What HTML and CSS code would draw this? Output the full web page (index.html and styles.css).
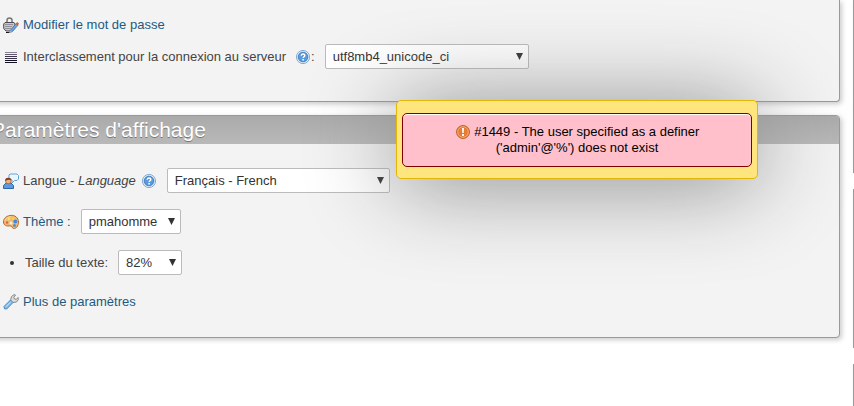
FILE: index.html
```
<!DOCTYPE html>
<html lang="fr">
<head>
    <meta charset="UTF-8">
    <meta name="viewport" content="width=device-width, initial-scale=1.0">
    <title>phpMyAdmin</title>
    <link rel="stylesheet" href="styles.css">
</head>
<body>
    <svg class="defs" width="0" height="0">
        <symbol id="help" viewBox="0 0 16 16">
            <circle cx="8" cy="8" r="6.600" fill="#dcebf8" stroke="#7ba4cf" stroke-width=".9"/>
            <circle cx="8" cy="8" r="4.800" fill="#5c9bdb" stroke="#3b73b4" stroke-width=".8"/>
            <path d="M6.200 6.700C6.200 4.500 9.800 4.500 9.800 6.500C9.800 7.800 8.100 7.800 8.100 9.100" fill="none" stroke="#fff" stroke-width="1.400"/>
            <rect x="7.300" y="10" width="1.600" height="1.500" fill="#fff"/>
        </symbol>
    </svg>

    <div class="page">
        <main class="main-panes">
            <section class="group">
                <ul class="settings">
                    <li>
                        <svg class="icon" viewBox="0 0 16 16">
                            <path d="M4 5.500V3.500C4 .3 9 .3 9 3.500V5.500" fill="none" stroke="#777" stroke-width="1.500"/>
                            <path d="M2 5.500H11L12 7V11L9.500 14H3L.7 11.500V7Z" fill="#c9c9cc" stroke="#4c4a50"/>
                            <path d="M2 7.500H10M2 9.500H9M2 11.500H8" stroke="#929098"/>
                            <path d="M3 15.500H7" stroke="#15151c"/>
                            <path d="M7 13.800L13 6.500L15 8.300L9 14.800L6.300 15.500Z" fill="#6ba7e6" stroke="#3466a4" stroke-width=".7"/>
                            <path d="M12.600 6.900L14.200 5L16 6.700L14.700 8.500Z" fill="#cf6528"/>
                            <path d="M7 13.500L9 15L6 15.800Z" fill="#f0b169"/>
                        </svg>
                        <a href="#">Modifier le mot de passe</a>
                    </li>
                    <li>
                        <svg class="icon" viewBox="0 0 16 16">
                            <path d="M2 3.500H14" stroke="#8b8395"/>
                            <path d="M2 5.500H14" stroke="#625b70"/>
                            <path d="M2 7.500H14M2 9.500H14" stroke="#3c344d"/>
                            <path d="M2 11.500H14M2 13.500H14" stroke="#12101f"/>
                        </svg>
                        <label for="collation">Interclassement pour la connexion au serveur</label>
                        <span class="hint hint-wide"><a href="#" aria-label="Documentation"><svg class="icon"><use href="#help"/></svg></a>:</span>
                        <select id="collation" class="select select-collation">
                            <option>utf8mb4_unicode_ci</option>
                        </select>
                    </li>
                </ul>
            </section>

            <section class="group">
                <h2>Paramètres d'affichage</h2>
                <ul class="settings settings-display">
                    <li>
                        <svg class="icon" viewBox="0 0 16 16">
                            <path d="M7 1H14L15.500 2.500V6L14 7.500H11.500L9 10V7L6 5.500V2Z" fill="#eaf6ff" stroke="#60a4dc"/>
                            <path d="M.5 15.500V12.500L3 10H8L10.500 12.500V15.500Z" fill="#5b9ade" stroke="#2c67ae"/>
                            <circle cx="5.300" cy="8" r="2.800" fill="#f1b07f" stroke="#a75c36" stroke-width=".7"/>
                            <path d="M2.200 8C1.800 3.800 7.800 3.800 8.300 7L5 6.800Z" fill="#813a20"/>
                        </svg>
                        <label for="language">Langue - <em>Language</em></label>
                        <a href="#" class="hint" aria-label="Documentation"><svg class="icon"><use href="#help"/></svg></a>
                        <select id="language" class="select select-language">
                            <option>Français - French</option>
                        </select>
                    </li>
                    <li>
                        <svg class="icon" viewBox="0 0 16 16">
                            <path d="M7 1.500C12 .5 15.500 4 15.500 8C15.500 12 13 15 10.500 14.500C8.500 14 9.500 11.500 7 11.800C4 12.500 .5 11.500 .5 8C.5 4.500 3 2.200 7 1.500Z" fill="#efb878" stroke="#b86a2d"/>
                            <path d="M2 7C3 4 5 3 8 2.700" fill="none" stroke="#ffdca8"/>
                            <circle cx="4" cy="8.500" r="1.300" fill="#d0713f"/>
                            <circle cx="6" cy="5" r="1.400" fill="#f6df62"/>
                            <circle cx="10" cy="4.500" r="1.300" fill="#ffd43e"/>
                            <circle cx="12.300" cy="7.500" r="1.900" fill="#408bd8"/>
                            <circle cx="11.500" cy="11.500" r="1.500" fill="#5a8fb5"/>
                            <circle cx="8" cy="9" r="1.500" fill="#fff0d5"/>
                        </svg>
                        <label for="theme"><a href="#">Thème</a> :</label>
                        <select id="theme" class="select select-theme">
                            <option>pmahomme</option>
                        </select>
                    </li>
                    <li>
                        <span class="bullet"></span>
                        <label for="fontsize">Taille du texte:</label>
                        <select id="fontsize" class="select select-size">
                            <option>82%</option>
                        </select>
                    </li>
                    <li>
                        <svg class="icon" viewBox="0 0 16 16">
                            <path d="M7.500 6.500L8.500 2.500L11 .7L12.500 1L10.800 3.300L11.500 5L13.200 5.300L15.200 3.500L15.300 5.500L13.500 8L9.500 8.500Z" fill="#ddd" stroke="#85878b"/>
                            <path d="M1 12.500L7.500 6L10 8.500L3.700 15L1.500 14.800Z" fill="#80bcf0" stroke="#4c86bf"/>
                            <path d="M2.800 12.800L7.700 8" stroke="#c9e6ff"/>
                        </svg>
                        <a href="#">Plus de paramètres</a>
                    </li>
                </ul>
            </section>
        </main>

        <aside class="side-panes">
            <div class="side-group side-server"></div>
            <div class="side-group side-web"></div>
            <div class="side-group side-pma"></div>
        </aside>
    </div>

    <div class="notification" role="alert">
        <div class="error">
            <svg class="icon" viewBox="0 0 16 16">
                <circle cx="8" cy="8" r="6.500" fill="#e57b35" stroke="#bd672f"/>
                <circle cx="8" cy="8" r="5.300" fill="none" stroke="#f7b787" stroke-width=".8"/>
                <path d="M7 4H9L8.700 9H7.300Z" fill="#fff"/>
                <rect x="7" y="10" width="2" height="2" fill="#fff"/>
            </svg>
            #1449 - The user specified as a definer ('admin'@'%') does not exist
        </div>
    </div>
</body>
</html>
```
FILE: styles.css
```
* {
    box-sizing: border-box;
}
body {
    margin: 0;
    background: #fff;
    color: #444;
    font-family: "Liberation Sans", Arial, sans-serif;
    font-size: 13px;
    line-height: 16px;
    overflow: hidden;
}
a {
    color: #235a81;
    text-decoration: none;
}
a:hover {
    text-decoration: underline;
}
.defs {
    display: block;
}
.icon {
    display: block;
    flex: none;
    width: 16px;
    height: 16px;
}

/* columns */
.page {
    display: grid;
    grid-template-columns: 1fr 1px;
    column-gap: 13px;
    min-height: 100vh;
}
.main-panes {
    min-width: 0;
    margin-left: -10px;
}
.group {
    margin-bottom: 13px;
    background: #f3f3f3;
    border: 1px solid #999;
    border-radius: 4px;
    box-shadow: 2px 2px 5px #ccc;
}
.group:first-child {
    border-top: 0;
    border-top-left-radius: 0;
    border-top-right-radius: 0;
}
.group h2 {
    margin: 0;
    padding: 2px 0;
    background: linear-gradient(#aaa, #b8b8b8);
    border-radius: 3px 3px 0 0;
    color: #fff;
    font-size: 21px;
    font-weight: normal;
    line-height: 24px;
    text-shadow: 0 1px 0 #777;
}

/* rows of settings */
.settings {
    display: flex;
    flex-direction: column;
    gap: 11px;
    margin: 0;
    padding: 17px 12px 32px;
    list-style: none;
}
.settings-display {
    gap: 16px;
    padding: 24px 12px 27px;
}
.settings li {
    display: flex;
    align-items: center;
    gap: 4px;
}
.settings-display li:last-child {
    padding-top: 3px;
}
.hint {
    display: flex;
    margin-left: 1px;
}
.hint-wide {
    margin-left: 5px;
}
.bullet {
    width: 4px;
    height: 4px;
    margin: 0 7px 0 7px;
    background: #333;
    border-radius: 50%;
}
.select {
    appearance: none;
    height: 25px;
    margin: 0 0 0 6px;
    padding: 0 20px 0 7px;
    background: #fff url("data:image/svg+xml,%3Csvg xmlns='http://www.w3.org/2000/svg' width='7' height='7'%3E%3Cpath d='M0 0h7L3.500 7z' fill='%23333'/%3E%3C/svg%3E") no-repeat right 5px top 8px;
    border: 1px solid #bbb;
    border-radius: 2px;
    color: #333;
    font: inherit;
}
.select-collation {
    width: 204px;
}
.select-language {
    width: 223px;
}
.select-theme {
    width: 100px;
}
.select-size {
    width: 64px;
}

/* right column */
.side-panes {
    display: flex;
    flex-direction: column;
    gap: 16px;
}
.side-group {
    background: #999;
    box-shadow: 2px 2px 5px #ccc;
}
.side-server {
    height: 173px;
}
.side-web {
    height: 159px;
}
.side-pma {
    flex: 1;
}

/* error popup */
.notification {
    position: fixed;
    top: 100px;
    right: 96px;
    width: 362px;
    padding: 12px 5px 11px;
    background: #ffe57e;
    border: 1px solid #e2b709;
    border-radius: 5px;
    box-shadow: 0 5px 90px #888;
}
.error {
    padding: 10px 40px;
    background: pink;
    border: 1px solid maroon;
    border-radius: 5px;
    box-shadow: 0 1px 1px #fff inset;
    color: #000;
    text-align: center;
}
.error .icon {
    display: inline-block;
    vertical-align: -4px;
}
```
